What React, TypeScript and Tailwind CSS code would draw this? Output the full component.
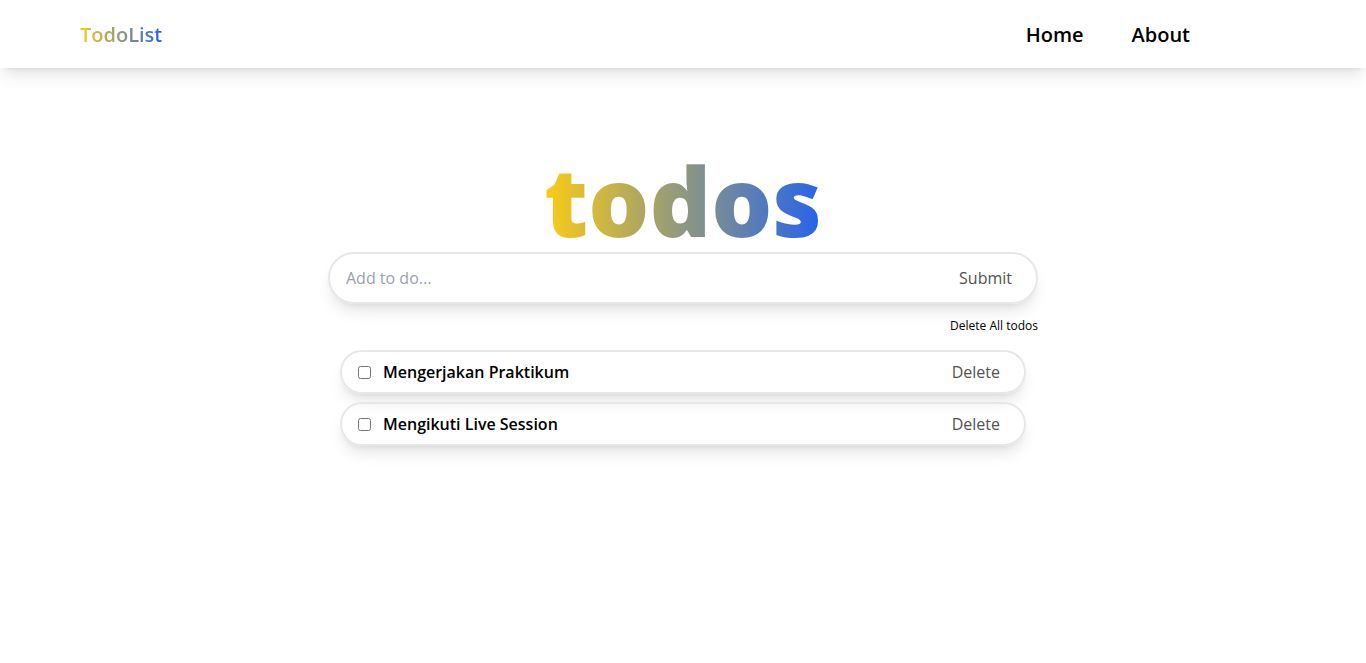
const todos = ["Mengerjakan Praktikum", "Mengikuti Live Session"];

export default function App() {
  return (
    <div className="min-h-screen bg-white font-['Open_Sans','Noto_Sans',sans-serif] text-black">
      <nav className="flex items-center justify-between bg-white pt-[21px] pr-44 pb-[19px] pl-20 text-xl shadow-lg">
        <a href="#" className="bg-linear-to-r/srgb from-[#facc15] to-[#2563eb] bg-clip-text font-semibold text-transparent">
          TodoList
        </a>
        <div className="flex gap-12 font-semibold">
          <a href="#home">Home</a>
          <a href="#about">About</a>
        </div>
      </nav>
      <main className="mx-auto flex w-[710px] max-w-full flex-col pt-[84px]">
        <h1 className="mb-1 self-center bg-linear-to-r/srgb from-[#facc15] to-[#2563eb] bg-clip-text text-8xl font-black text-transparent">
          todos
        </h1>
        <form
          onSubmit={(e) => e.preventDefault()}
          className="flex h-[52px] items-center rounded-full border-2 border-gray-200 pr-6 pl-4 shadow-lg"
        >
          <input
            aria-label="Add to do"
            placeholder="Add to do..."
            className="min-w-0 flex-1 outline-none placeholder:text-gray-400"
          />
          <button className="text-neutral-600">Submit</button>
        </form>
        <button type="button" className="mt-3 self-end text-xs leading-5">
          Delete All todos
        </button>
        <ul className="mx-3 mt-[14px] flex flex-col gap-2">
          {todos.map((todo) => (
            <li
              key={todo}
              className="flex h-11 items-center justify-between rounded-full border-2 border-gray-200 pr-6 pl-4 shadow-lg"
            >
              <label className="flex items-center gap-3 font-semibold">
                <input type="checkbox" />
                {todo}
              </label>
              <button type="button" className="text-neutral-600">
                Delete
              </button>
            </li>
          ))}
        </ul>
      </main>
    </div>
  );
}
